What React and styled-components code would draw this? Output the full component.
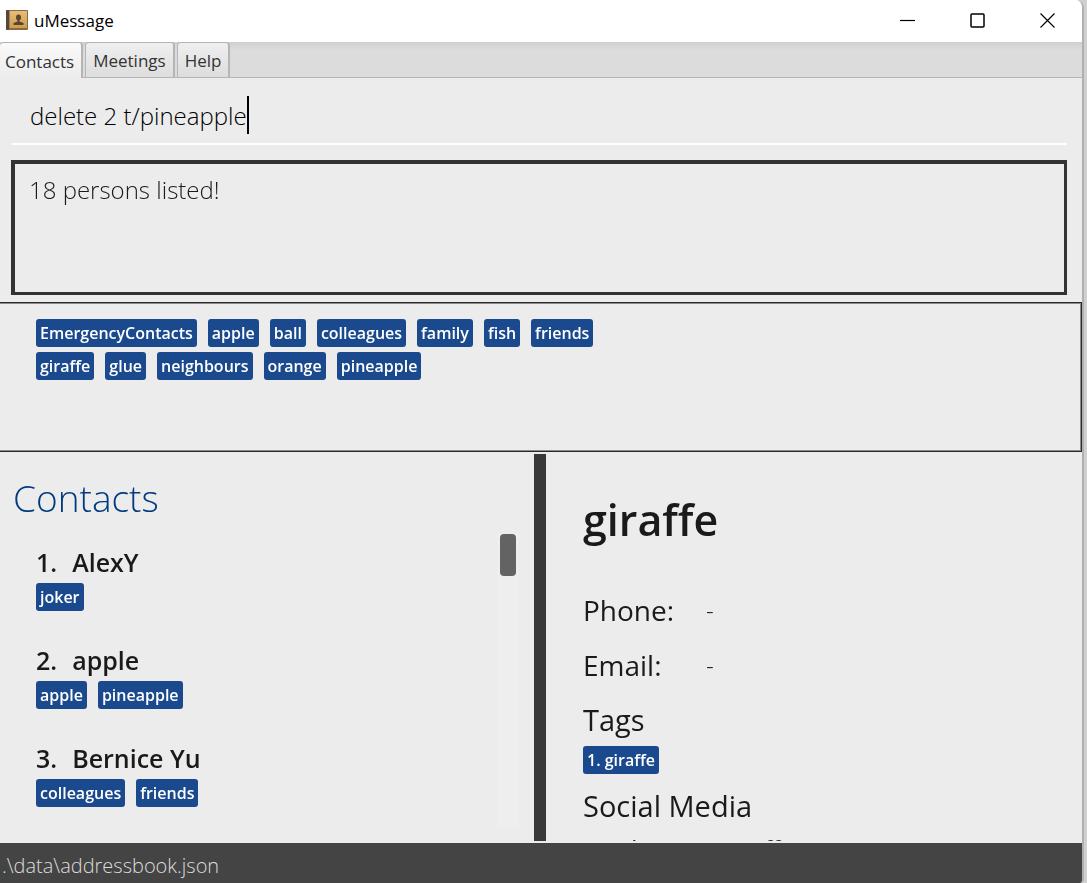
import React, { useState } from "react";
import styled, { createGlobalStyle, css } from "styled-components";

const GlobalStyle = createGlobalStyle`
  *, *::before, *::after { box-sizing: border-box; }
  body {
    margin: 0;
    background: #d0d0d0;
    color: #1a1a1a;
    font-family: "Segoe UI", "Open Sans", "Noto Sans", sans-serif;
  }
  h1, h2, h3, p, ol, ul, dl, dd { margin: 0; padding: 0; }
  ol, ul { list-style: none; }
`;

const Window = styled.div`
  height: 100vh;
  margin-right: 3px;
  display: flex;
  flex-direction: column;
  overflow: hidden;
  background: #ececec;
  border-right: 2px solid #b0b0b0;
  border-radius: 0 8px 4px 0;
`;

const TitleBar = styled.header`
  flex: none;
  height: 42px;
  display: flex;
  align-items: center;
  padding-left: 6px;
  background: #fff;
`;

const AppName = styled.h1`
  flex: 1;
  margin-left: 6px;
  font-size: 17px;
  font-weight: 400;
  line-height: 24px;
  color: #000;
`;

const WindowButton = styled.button`
  width: 70px;
  height: 40px;
  display: grid;
  place-items: center;
  padding: 0;
  border: 0;
  background: transparent;
`;

const TabBar = styled.nav`
  flex: none;
  height: 36px;
  display: flex;
  gap: 2px;
  background: linear-gradient(#cfcfcf, #dcdcdc 8px);
  border-bottom: 1px solid #b5b5b5;
`;

const Tab = styled.button`
  height: 35px;
  padding: 2px 7px 0;
  font: inherit;
  font-size: 17px;
  line-height: 24px;
  color: #333;
  background: linear-gradient(#efefef, #dddddd);
  border: 1px solid #b5b5b5;
  border-width: 1px 2px 0 1px;
  border-radius: 4px 4px 0 0;
  ${(p) =>
    p.$active &&
    css`
      height: 36px;
      padding-left: 5px;
      background: linear-gradient(#fafafa, #ececec);
      border-left: 0;
    `}
`;

const CommandField = styled.label`
  flex: none;
  height: 56px;
  margin: 11px 15px 15px 12px;
  padding: 0 18px 2px;
  display: flex;
  align-items: center;
  border-bottom: 2px solid #fff;
`;

const CommandInput = styled.input`
  field-sizing: content;
  max-width: 100%;
  padding: 0;
  border: 0;
  outline: 0;
  background: transparent;
  font: inherit;
  font-size: 24px;
  font-weight: 300;
  color: #000;
  caret-color: transparent;
`;

const Caret = styled.span`
  width: 2px;
  height: 38px;
  background: #000;
`;

const ResultBox = styled.output`
  flex: none;
  height: 135px;
  margin: 0 15px 7px 11px;
  padding: 10px 14px;
  border: 3px solid #333;
  border-width: 4px 3px 3px 4px;
  font-size: 24px;
  font-weight: 300;
  line-height: 32px;
`;

const TagPanel = styled.section`
  flex: none;
  height: 150px;
  padding: 16px 36px;
  border: 1px solid #2a2a2a;
  border-left: 0;
  box-shadow: inset -1px 1px 0 #8a8a8a, inset -1px -1px 0 #8a8a8a;
`;

const TagList = styled.ul`
  display: flex;
  flex-wrap: wrap;
  gap: 5px 11px;
  max-width: ${(p) => p.$maxWidth || "none"};
`;

const Tag = styled.li`
  height: 28px;
  padding: 0 4px;
  border-radius: 3px;
  background: #1a4a8d;
  color: #fff;
  font-size: 16px;
  font-weight: 600;
  line-height: 28px;
  white-space: nowrap;
`;

const Split = styled.main`
  flex: 1;
  min-height: 0;
  display: grid;
  grid-template-columns: minmax(0, 534fr) 12px minmax(0, 536fr);
  padding: 2px 0;
`;

const ContactPane = styled.section`
  display: flex;
  flex-direction: column;
  min-height: 0;
`;

const PaneTitle = styled.h2`
  padding: 16px 13px 8px;
  font-size: 37px;
  font-weight: 300;
  line-height: 56px;
  color: #003a80;
`;

const ContactScroll = styled.div`
  flex: 1;
  min-height: 0;
  display: flex;
  justify-content: space-between;
  padding: 0 15px 14px 36px;
`;

const ContactList = styled.ol`
  overflow: hidden;
`;

const Contact = styled.li`
  height: 98px;
  padding-top: 10px;
`;

const ContactName = styled.h3`
  display: flex;
  gap: 15px;
  margin-bottom: 3px;
  font-size: 25px;
  font-weight: 600;
  line-height: 36px;
`;

const ScrollTrack = styled.div`
  width: 22px;
  padding: 0 3px;
  background: #eee;
`;

const ScrollThumb = styled.div`
  height: 42px;
  border-radius: 4px;
  background: #636363;
`;

const Divider = styled.div`
  background: #383838;
`;

const DetailPane = styled.section`
  min-height: 0;
  padding: 34px 37px 0;
  overflow: hidden;
`;

const DetailName = styled.h2`
  margin-bottom: 38px;
  font-size: 43px;
  font-weight: 600;
  line-height: 64px;
`;

const FieldList = styled.dl`
  display: grid;
  grid-template-columns: 123px 1fr;
  row-gap: 15px;
  margin-bottom: 15px;
  font-size: 28px;
  line-height: 40px;
`;

const FieldValue = styled.dd`
  font-size: 24px;
  font-weight: 300;
`;

const SectionTitle = styled.h3`
  margin: ${(p) => (p.$spaced ? "12px 0 0" : "0 0 6px")};
  font-size: 29px;
  font-weight: 400;
  line-height: 40px;
`;

const Handle = styled.p`
  margin-top: 5px;
  font-size: 24px;
  line-height: 36px;
`;

const StatusBar = styled.footer`
  flex: none;
  height: 40px;
  padding: 7px 2px;
  background: #444;
  color: #dcdcdc;
  font-size: 20px;
  font-weight: 300;
  line-height: 32px;
`;

const AddressBookIcon = () => (
  <svg width="22" height="22" viewBox="0 0 22 22" aria-hidden="true">
    <defs>
      <linearGradient id="cover" x1="0" y1="0" x2="0" y2="1">
        <stop offset="0" stopColor="#e6bd78" />
        <stop offset="1" stopColor="#cd9c50" />
      </linearGradient>
    </defs>
    <rect x="0" y="0" width="22" height="20" rx="1" fill="#8a6a3c" />
    <rect x="0" y="0" width="3" height="20" rx="1" fill="#54463e" />
    <rect x="3" y="1" width="18" height="17" fill="url(#cover)" />
    <rect x="3" y="1" width="1" height="17" fill="#a5814c" />
    <ellipse cx="12.500" cy="7.500" rx="2.500" ry="3" fill="#5b452c" />
    <path d="M11.500 9h2v2.500l4 1.500v2h-10v-2l4-1.500z" fill="#5b452c" />
  </svg>
);

const windowControls = [
  { label: "Minimize", shape: <path d="M0 7.500h15" /> },
  { label: "Maximize", shape: <rect x="1" y="1" width="13" height="13" rx="1" strokeWidth="1.500" /> },
  { label: "Close", shape: <path d="M0.500 0.500l14 14M14.500 0.500l-14 14" /> },
];

const tabs = ["Contacts", "Meetings", "Help"];

const allTags = [
  "EmergencyContacts", "apple", "ball", "colleagues", "family", "fish",
  "friends", "giraffe", "glue", "neighbours", "orange", "pineapple",
];

const contacts = [
  { name: "AlexY", tags: ["joker"] },
  { name: "apple", tags: ["apple", "pineapple"] },
  { name: "Bernice Yu", tags: ["colleagues", "friends"] },
];

export default function App() {
  const [command, setCommand] = useState("delete 2 t/pineapple");
  const [activeTab, setActiveTab] = useState("Contacts");

  return (
    <>
      <GlobalStyle />
      <Window>
        <TitleBar>
          <AddressBookIcon />
          <AppName>uMessage</AppName>
          {windowControls.map(({ label, shape }) => (
            <WindowButton key={label} type="button" aria-label={label}>
              <svg width="15" height="16" fill="none" stroke="#000" strokeWidth="1.200">
                {shape}
              </svg>
            </WindowButton>
          ))}
        </TitleBar>
        <TabBar>
          {tabs.map((tab) => (
            <Tab key={tab} type="button" $active={tab === activeTab} onClick={() => setActiveTab(tab)}>
              {tab}
            </Tab>
          ))}
        </TabBar>
        <CommandField>
          <CommandInput
            aria-label="Command"
            autoFocus
            spellCheck={false}
            value={command}
            onChange={(e) => setCommand(e.target.value)}
          />
          <Caret />
        </CommandField>
        <ResultBox>18 persons listed!</ResultBox>
        <TagPanel>
          <TagList $maxWidth="600px">
            {allTags.map((tag) => (
              <Tag key={tag}>{tag}</Tag>
            ))}
          </TagList>
        </TagPanel>
        <Split>
          <ContactPane>
            <PaneTitle>Contacts</PaneTitle>
            <ContactScroll>
              <ContactList>
                {contacts.map((contact, index) => (
                  <Contact key={contact.name}>
                    <ContactName>
                      <span>{index + 1}.</span>
                      <span>{contact.name}</span>
                    </ContactName>
                    <TagList>
                      {contact.tags.map((tag) => (
                        <Tag key={tag}>{tag}</Tag>
                      ))}
                    </TagList>
                  </Contact>
                ))}
              </ContactList>
              <ScrollTrack>
                <ScrollThumb />
              </ScrollTrack>
            </ContactScroll>
          </ContactPane>
          <Divider />
          <DetailPane>
            <DetailName>giraffe</DetailName>
            <FieldList>
              <dt>Phone:</dt>
              <FieldValue>-</FieldValue>
              <dt>Email:</dt>
              <FieldValue>-</FieldValue>
            </FieldList>
            <SectionTitle>Tags</SectionTitle>
            <TagList>
              <Tag>1. giraffe</Tag>
            </TagList>
            <SectionTitle $spaced>Social Media</SectionTitle>
            <Handle>1. telegram: giraffe</Handle>
          </DetailPane>
        </Split>
        <StatusBar>.\data\addressbook.json</StatusBar>
      </Window>
    </>
  );
}
